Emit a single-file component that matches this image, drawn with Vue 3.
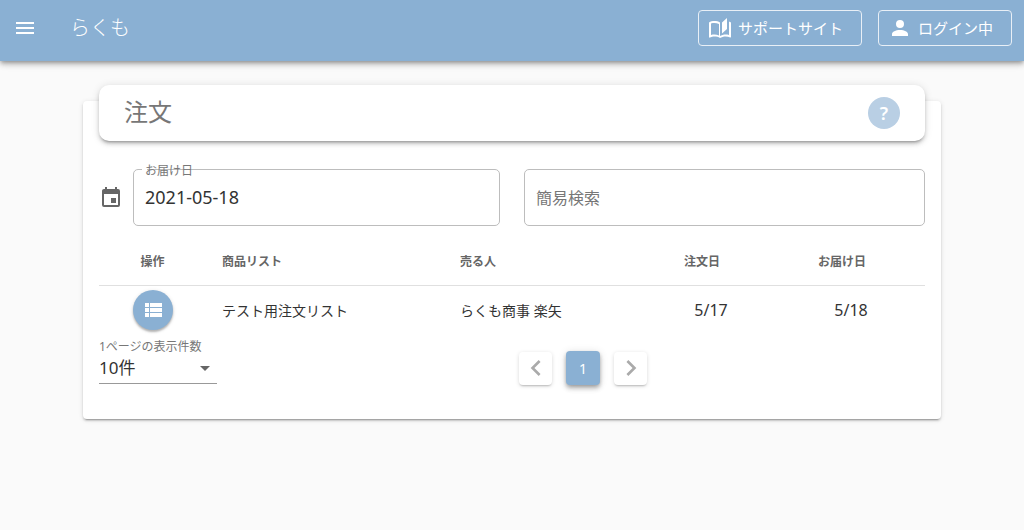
<script setup>
import { ref } from 'vue'

const deliveryDate = ref('2021-05-18')
const keyword = ref('')
const perPage = ref(10)
const orders = [
  { id: 1, list: 'テスト用注文リスト', seller: 'らくも商事 楽矢', ordered: '5/17', delivered: '5/18' },
]
</script>

<template>
  <div class="app">
    <header class="bar">
      <button class="menu" type="button" aria-label="メニュー">
        <svg viewBox="0 0 24 24"><path d="M3 6h18v2H3V6m0 5h18v2H3v-2m0 5h18v2H3v-2z" /></svg>
      </button>
      <div class="brand">らくも</div>
      <div class="actions">
        <button class="outlined" type="button">
          <svg viewBox="0 0 24 24"><path d="M19 2l-5 4.500v11l5-4.500V2M6.500 5C4.550 5 2.450 5.400 1 6.500v14.660c0 .25.250.5.500.5.100 0 .150-.070.250-.070 1.350-.650 3.300-1.090 4.750-1.090 1.950 0 4.050.400 5.500 1.500 1.350-.850 3.800-1.500 5.500-1.500 1.650 0 3.350.310 4.750 1.060.100.050.150.030.250.030.250 0 .500-.250.500-.500V6.500c-.600-.450-1.250-.750-2-1V19c-1.100-.350-2.300-.500-3.500-.500-1.700 0-4.150.650-5.500 1.500V6.500C10.550 5.400 8.450 5 6.500 5M3 7.500c1.100-.350 2.300-.500 3.500-.500 1.340 0 3.130.410 4.500.990v11.500c-1.370-.580-3.160-.990-4.500-.990-1.200 0-2.400.150-3.500.500V7.500z" /></svg>
          <span>サポートサイト</span>
        </button>
        <button class="outlined" type="button">
          <svg viewBox="0 0 24 24"><path d="M12 4a4 4 0 0 1 4 4 4 4 0 0 1-4 4 4 4 0 0 1-4-4 4 4 0 0 1 4-4m0 10c4.420 0 8 1.790 8 4v2H4v-2c0-2.210 3.580-4 8-4z" /></svg>
          <span>ログイン中</span>
        </button>
      </div>
    </header>

    <main class="card">
      <div class="title">
        <h1>注文</h1>
        <button class="help" type="button" aria-label="ヘルプ">?</button>
      </div>

      <div class="filters">
        <div class="date">
          <svg viewBox="0 0 24 24"><path d="M19 19H5V8h14m-3-7v2H8V1H6v2H5c-1.110 0-2 .890-2 2v14a2 2 0 0 0 2 2h14a2 2 0 0 0 2-2V5a2 2 0 0 0-2-2h-1V1m-1 11h-5v5h5v-5z" /></svg>
          <div class="field">
            <label for="delivery">お届け日</label>
            <input id="delivery" v-model="deliveryDate" type="text">
          </div>
        </div>
        <div class="field">
          <input v-model="keyword" type="text" placeholder="簡易検索" aria-label="簡易検索">
        </div>
      </div>

      <table>
        <colgroup>
          <col class="c-op"><col class="c-list"><col class="c-seller"><col class="c-ordered"><col class="c-delivered">
        </colgroup>
        <thead>
          <tr>
            <th class="center">操作</th>
            <th>商品リスト</th>
            <th>売る人</th>
            <th class="center sortable">注文日</th>
            <th class="center sortable">お届け日</th>
          </tr>
        </thead>
        <tbody>
          <tr v-for="o in orders" :key="o.id">
            <td class="center">
              <button class="fab" type="button" aria-label="詳細">
                <svg viewBox="0 0 24 24"><path d="M9 5v4h12V5M9 19h12v-4H9m0-1h12v-4H9M4 9h4V5H4m0 14h4v-4H4m0-1h4v-4H4v4z" /></svg>
              </button>
            </td>
            <td>{{ o.list }}</td>
            <td>{{ o.seller }}</td>
            <td class="center day">{{ o.ordered }}</td>
            <td class="center day">{{ o.delivered }}</td>
          </tr>
        </tbody>
      </table>

      <div class="footer">
        <div class="per-page">
          <label for="per-page">1ページの表示件数</label>
          <div class="select">
            <select id="per-page" v-model="perPage">
              <option :value="10">10件</option>
            </select>
            <svg viewBox="0 0 24 24"><path d="M7 10l5 5 5-5H7z" /></svg>
          </div>
        </div>
        <nav class="pages" aria-label="ページ">
          <button class="step" type="button" aria-label="前のページ" disabled>
            <svg viewBox="0 0 24 24"><path d="M15.410 16.580L10.830 12l4.580-4.590L14 6l-6 6 6 6 1.410-1.420z" /></svg>
          </button>
          <button class="page" type="button" aria-current="page">1</button>
          <button class="step" type="button" aria-label="次のページ" disabled>
            <svg viewBox="0 0 24 24"><path d="M8.590 16.580L13.170 12 8.590 7.410 10 6l6 6-6 6-1.410-1.420z" /></svg>
          </button>
        </nav>
      </div>
    </main>
  </div>
</template>

<style>
body {
  background: #fafafa;
}
</style>

<style scoped>
.app {
  font-family: "Noto Sans", "Noto Sans CJK JP", sans-serif;
  color: #333;
  font-size: 14px;
}
.app * {
  box-sizing: border-box;
}
button,
input,
select {
  font: inherit;
  color: inherit;
  margin: 0;
  padding: 0;
  border: 0;
  background: none;
}
button {
  display: flex;
  align-items: center;
  justify-content: center;
}
svg {
  display: block;
  flex: none;
  width: 24px;
  height: 24px;
  fill: currentColor;
}
.bar {
  display: flex;
  align-items: center;
  height: 61px;
  padding: 0 12px 5px 13px;
  background: #8ab0d3;
  color: #fff;
  box-shadow: 0 2px 4px -1px rgba(0, 0, 0, .3), 0 4px 5px rgba(0, 0, 0, .14), 0 1px 10px rgba(0, 0, 0, .12);
}
.brand {
  margin-left: 33px;
  font-size: 20px;
  line-height: 26px;
  font-weight: 300;
}
.actions {
  display: flex;
  gap: 16px;
  margin-left: auto;
}
.outlined {
  gap: 6px;
  height: 36px;
  padding: 0 18px 0 9px;
  border: 1px solid #e8eff6;
  border-radius: 4px;
  font-size: 15px;
  line-height: 20px;
}
.card {
  margin: 40px 83px;
  padding: 0 16px 34px;
  background: #fff;
  border-radius: 4px;
  box-shadow: 0 3px 1px -2px rgba(0, 0, 0, .2), 0 2px 2px rgba(0, 0, 0, .14), 0 1px 5px rgba(0, 0, 0, .12);
}
.title {
  display: flex;
  align-items: center;
  justify-content: space-between;
  position: relative;
  top: -16px;
  height: 56px;
  padding: 0 25px;
  background: #fff;
  border-radius: 10px;
  box-shadow: 0 3px 3px -2px rgba(0, 0, 0, .3), 0 3px 4px rgba(0, 0, 0, .14), 0 1px 8px rgba(0, 0, 0, .12);
}
h1 {
  margin: 0;
  padding-bottom: 2px;
  font-size: 24px;
  line-height: 32px;
  font-weight: 400;
  color: #777;
}
.help {
  width: 32px;
  height: 32px;
  border-radius: 50%;
  background: #b9cfe4;
  color: #fff;
  font-size: 18px;
  font-weight: 600;
}
.filters {
  display: grid;
  grid-template-columns: 1fr 1fr;
  gap: 24px;
  margin-top: 12px;
}
.date {
  display: flex;
  align-items: center;
  gap: 10px;
  color: #666;
}
.field {
  position: relative;
  flex: 1;
}
.field label {
  position: absolute;
  top: -8px;
  left: 9px;
  padding: 0 3px;
  background: linear-gradient(#fff, #fff) left / 5px 100% no-repeat;
  font-size: 12px;
  line-height: 20px;
  color: #777;
}
.field input {
  display: block;
  width: 100%;
  height: 57px;
  padding: 0 11px 2px;
  border: 1px solid #bdbdbd;
  border-radius: 5px;
  font-size: 18px;
  color: #333;
}
.field input::placeholder {
  font-size: 16px;
  color: #777;
  opacity: 1;
}
table {
  width: 100%;
  margin-top: 11px;
  table-layout: fixed;
  border-collapse: collapse;
}
.c-op { width: 107px; }
.c-list { width: 238px; }
.c-seller { width: 201px; }
.c-ordered { width: 132px; }
.c-delivered { width: 148px; }
th,
td {
  padding: 0 16px;
  text-align: left;
}
th {
  height: 48px;
  border-bottom: 1px solid #e0e0e0;
  font-size: 12px;
  font-weight: 600;
  color: #666;
}
td {
  height: 49px;
}
.center {
  text-align: center;
}
.day {
  font-size: 16px;
}
th.sortable {
  padding-right: 34px;
}
.fab {
  width: 40px;
  height: 40px;
  margin: 0 auto;
  border-radius: 50%;
  background: #8ab0d3;
  color: #fff;
  box-shadow: 0 2px 2px rgba(0, 0, 0, .24), 0 1px 4px rgba(0, 0, 0, .12);
}
.footer {
  display: grid;
  grid-template-columns: 118px 1fr;
  gap: 24px;
  margin-top: 4px;
}
.per-page label {
  display: block;
  font-size: 12px;
  line-height: 18px;
  white-space: nowrap;
  color: #777;
}
.select {
  display: flex;
  align-items: center;
  position: relative;
  height: 28px;
  border-bottom: 1px solid #999;
}
select {
  width: 100%;
  height: 28px;
  padding-bottom: 5px;
  appearance: none;
  font-size: 17px;
}
.select svg {
  position: absolute;
  right: 0;
  top: 0;
  color: #666;
  pointer-events: none;
}
.pages {
  display: flex;
  align-items: center;
  justify-content: center;
  gap: 14px;
  padding-top: 13px;
}
.step {
  width: 33px;
  height: 33px;
  border-radius: 4px;
  background: #fff;
  color: #aaa;
  box-shadow: 0 2px 2px -1px rgba(0, 0, 0, .2), 0 1px 4px rgba(0, 0, 0, .14);
}
.step svg {
  width: 32px;
  height: 32px;
}
.page {
  width: 34px;
  height: 34px;
  border-radius: 4px;
  background: #8ab0d3;
  color: #fff;
  box-shadow: 0 2px 4px -1px rgba(0, 0, 0, .3), 0 4px 5px rgba(0, 0, 0, .14), 0 1px 8px rgba(0, 0, 0, .12);
}
</style>
